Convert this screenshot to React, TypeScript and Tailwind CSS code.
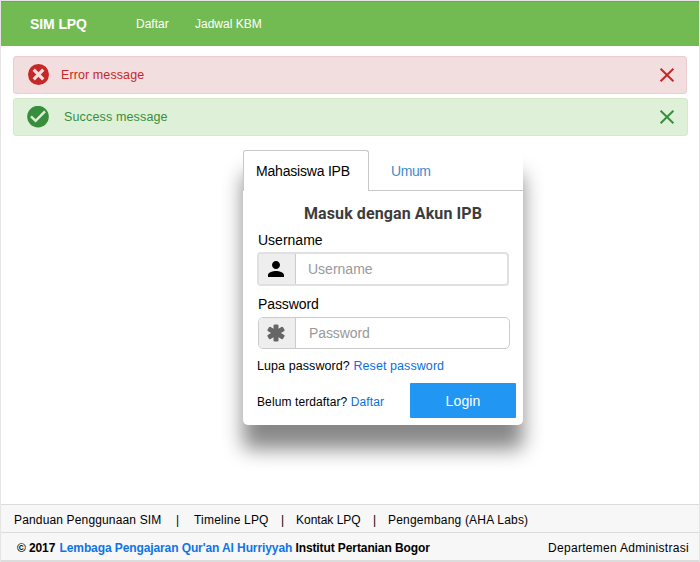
import React from "react";

const Close = ({ color }: { color: string }) => (
  <svg width="16" height="16" viewBox="0 0 16 16" className="block">
    <path d="M1.6 1.8L14.4 14.2M14.4 1.8L1.6 14.2" stroke={color} strokeWidth="2" fill="none" />
  </svg>
);

const ErrorIcon = () => (
  <svg width="22" height="22" viewBox="0 0 22 22" className="block">
    <circle cx="10.5" cy="10.5" r="10.5" fill="#c62828" />
    <path d="M5.700 5.700L15.3 15.3M15.3 5.700L5.700 15.3" stroke="#f2dede" strokeWidth="3.2" />
  </svg>
);

const SuccessIcon = () => (
  <svg width="22" height="22" viewBox="0 0 22 22" className="block">
    <circle cx="11" cy="10.6" r="10.8" fill="#388e3c" />
    <path d="M4 10.4L8.6 14.8L18 5.4" stroke="#dff0d8" strokeWidth="2.4" fill="none" />
  </svg>
);

const UserIcon = () => (
  <svg width="16" height="16" viewBox="4 4 16 16" className="block">
    <path d="M12 12c2.21 0 4-1.79 4-4s-1.79-4-4-4-4 1.79-4 4 1.79 4 4 4zm0 2c-2.67 0-8 1.34-8 4v2h16v-2c0-2.66-5.330-4-8-4z" fill="#000" />
  </svg>
);

const AsteriskIcon = () => (
  <svg width="18" height="18" viewBox="0 0 18 18" className="block">
    <g fill="#666">
      <rect x="6.500" y="0.500" width="5" height="17" rx="1.3" />
      <rect x="6.500" y="0" width="5" height="18" rx="1.3" transform="rotate(60 9 9)" />
      <rect x="6.500" y="0" width="5" height="18" rx="1.3" transform="rotate(-60 9 9)" />
    </g>
  </svg>
);

export default function App() {
  return (
    <div className="flex h-[562px] w-[700px] flex-col overflow-hidden border-x border-t border-[#e5e5e5] bg-white font-['Liberation_Sans',Arial,sans-serif] text-black whitespace-nowrap">
      <header className="-mx-px flex h-[45px] shrink-0 items-center border border-[#68ab4b] border-b-[#72bb53] bg-[#72bb53] pl-[29px] text-white">
        <span className="w-[106px] pt-px text-[14px] font-bold tracking-[-0.1px]">SIM LPQ</span>
        <span className="w-[59px] text-[12px]">Daftar</span>
        <span className="text-[12px]">Jadwal KBM</span>
      </header>

      <div className="flex flex-col gap-[4px] pt-[10px] pl-[12px]">
        <div className="flex h-[38px] w-[674px] items-center rounded-[3px] border border-[#ebccd1] bg-[#f2dede] pr-[11px] pl-[14px] text-[12.5px] text-[#c62828]">
          <ErrorIcon />
          <span className="ml-[11px] flex-1 pt-px tracking-[0.1px]">Error message</span>
          <Close color="#c62828" />
        </div>
        <div className="flex h-[38px] w-[675px] items-center rounded-[3px] border border-[#d6e9c6] bg-[#dff0d8] pr-[12px] pl-[13px] text-[12.5px] text-[#388e3c]">
          <SuccessIcon />
          <span className="ml-[15px] flex-1 tracking-[0.15px]">Success message</span>
          <Close color="#388e3c" />
        </div>
      </div>

      <main className="flex-1 pt-[14px] pl-[242px]">
        <section className="flex h-[275px] w-[280px] flex-col rounded-[5px] bg-white shadow-[0_24px_20px_rgba(0,0,0,0.47)]">
          <div className="flex h-[41px] bg-white text-[14px]">
            <div className="w-[126px] rounded-t-[3px] border border-b-0 border-[#c8c8c8] pt-[10px] pl-[12px] leading-[20px] tracking-[-0.2px]">Mahasiswa IPB</div>
            <div className="flex-1 border-b border-[#c8c8c8] pt-[11px] pl-[22px] leading-[20px] tracking-[-0.4px] text-[#428bca]">Umum</div>
          </div>
          <h1 className="mt-[12px] pl-[61px] font-['Roboto',sans-serif] text-[16px] leading-[22px] font-bold tracking-[0.1px] text-[#3c3c3c]">Masuk dengan Akun IPB</h1>
          <label className="mt-[5px] pl-[15px] text-[14px] leading-[20px]">Username</label>
          <div className="mt-[2px] ml-[14px] flex h-[34px] w-[252px] overflow-hidden rounded-[4px] border-2 border-[#e0e0e0]">
            <div className="flex w-[37px] items-center justify-center border-r border-[#ccc] bg-[#eee] pr-[2px]"><UserIcon /></div>
            <span className="pl-[12px] text-[14px] leading-[30px] text-[#999]">Username</span>
          </div>
          <label className="mt-[8px] pl-[15px] text-[14px] leading-[20px] tracking-[-0.1px]">Password</label>
          <div className="mt-[3px] ml-[15px] flex h-[32px] w-[252px] overflow-hidden rounded-[5px] border border-[#ccc]">
            <div className="flex w-[37px] items-center justify-center border-r border-[#ccc] bg-[#eee] pr-[2px] pb-px"><AsteriskIcon /></div>
            <span className="pl-[13px] text-[14px] leading-[31px] tracking-[-0.1px] text-[#999]">Password</span>
          </div>
          <p className="mt-[7px] pl-[14px] text-[12.5px] leading-[20px] tracking-[0.08px]">Lupa password? <a className="text-[#0a6fe0]">Reset password</a></p>
          <div className="mt-[7px] flex pl-[14px]">
            <p className="w-[153px] text-[12px] leading-[38px] tracking-[0.1px]">Belum terdaftar? <a className="text-[#0a6fe0]">Daftar</a></p>
            <button className="h-[35px] w-[106px] rounded-[1px] bg-[#2196f3] pt-px text-[14px] tracking-[0.1px] text-white">Login</button>
          </div>
        </section>
      </main>

      <footer className="shrink-0 border-b-2 border-[#dcdcdc] bg-[#f7f7f7] text-[12px]">
        <div className="flex h-[29px] items-center border-y border-[#dcdcdc] pt-[3px] pl-[13px]">
          <span className="w-[162px] tracking-[0.15px]">Panduan Penggunaan SIM</span>
          <span className="w-[18px]">|</span>
          <span className="w-[87px] tracking-[0.2px]">Timeline LPQ</span>
          <span className="w-[15px]">|</span>
          <span className="w-[77px]">Kontak LPQ</span>
          <span className="w-[15px]">|</span>
          <span className="tracking-[0.2px]">Pengembang (AHA Labs)</span>
        </div>
        <div className="flex h-[27px] items-center justify-between pt-[3px] pr-[10px] pl-[16px]">
          <b className="tracking-[-0.1px]">© 2017 <a className="ml-px text-[#1073e6]">Lembaga Pengajaran Qur'an Al Hurriyyah</a> Institut Pertanian Bogor</b>
          <span className="tracking-[0.3px]">Departemen Administrasi</span>
        </div>
      </footer>
    </div>
  );
}
